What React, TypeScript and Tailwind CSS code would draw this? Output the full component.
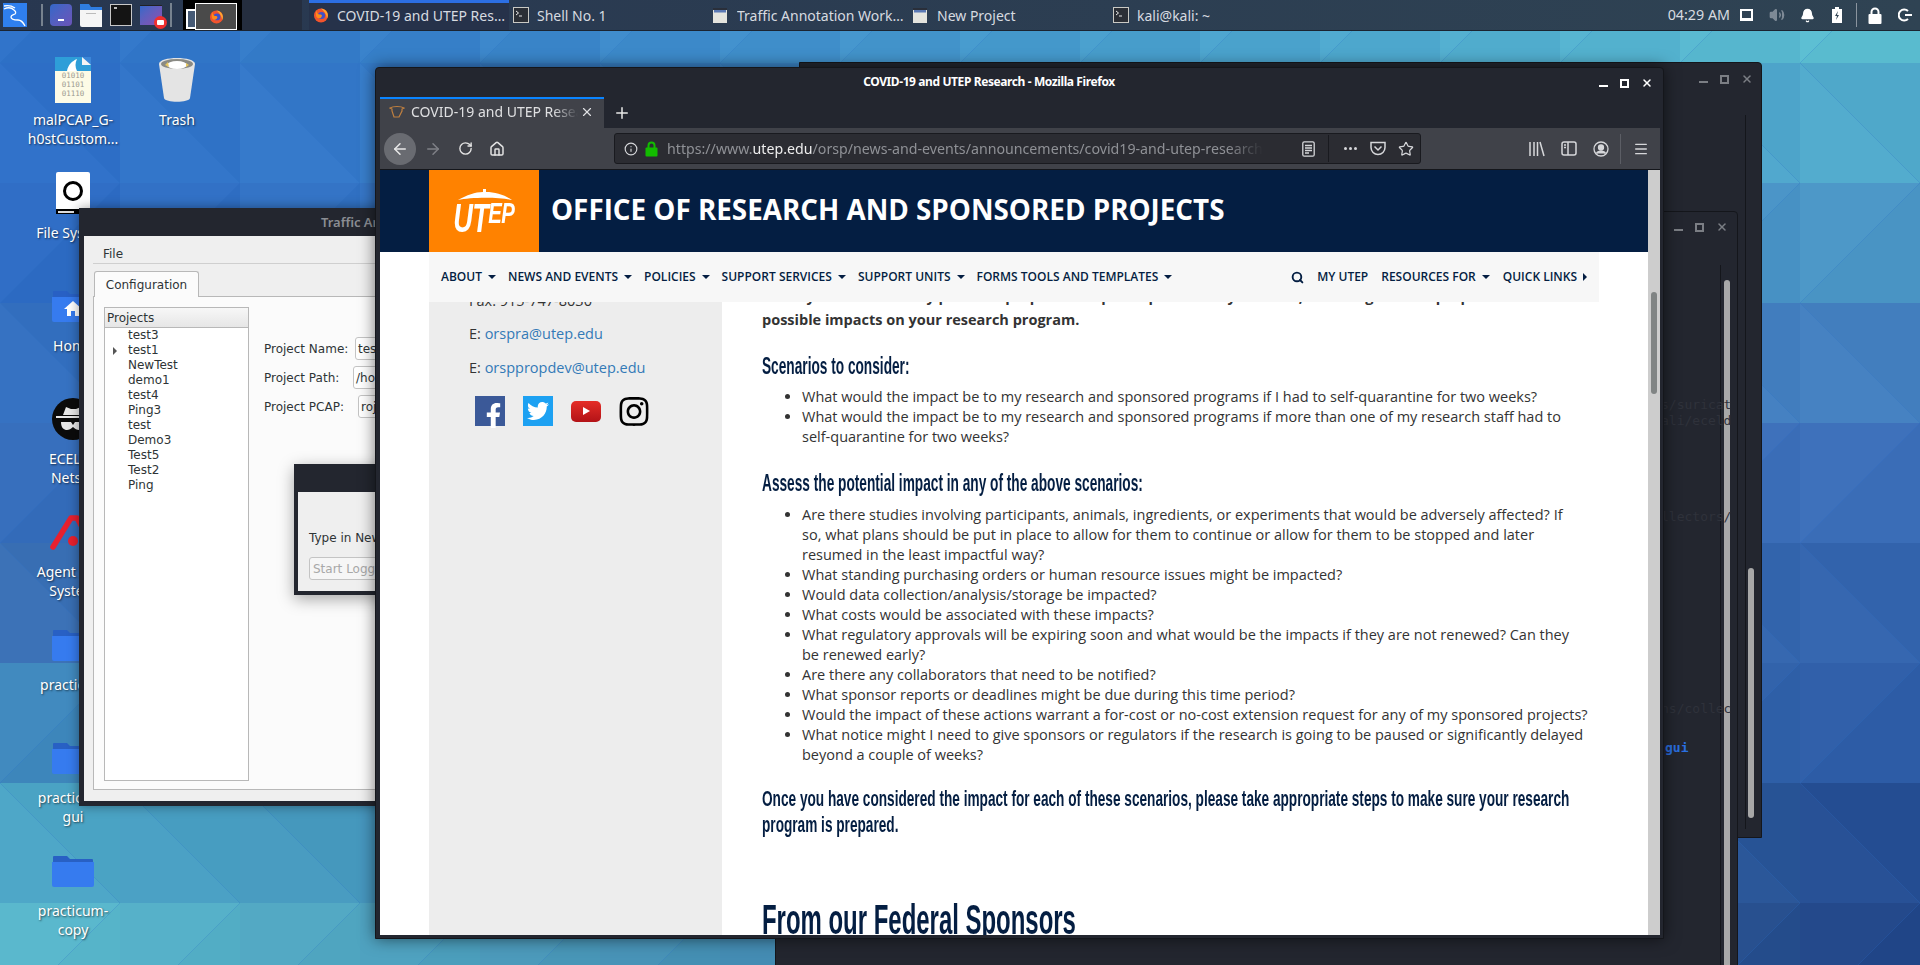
import type { ReactNode } from "react";
import {
  ArrowLeft,
  ArrowRight,
  RotateCw,
  Home,
  Info,
  Star,
  Menu,
  X,
  Plus,
  Bell,
  Volume2,
  Search,
} from "lucide-react";
import { FaFacebookF, FaTwitter, FaInstagram } from "react-icons/fa";

// wallpaper tile colours, left edge and right edge of each 120px row
const LEFT = ["#2f72c8", "#2f70c8", "#2e6cc4", "#3470c0", "#356dbb", "#3a70b5", "#3f88bd", "#4ca5c6", "#58b6cb"];
const RIGHT = ["#5bbdd1", "#51aacc", "#4b96c6", "#4480c0", "#3c6fb9", "#3465ae", "#2f5ea8", "#264f94", "#224789"];

const channels = (hex: string) => [1, 3, 5].map((i) => parseInt(hex.slice(i, i + 2), 16));

const tileColor = (row: number, col: number, delta: number) => {
  const a = channels(LEFT[row]);
  const b = channels(RIGHT[row]);
  const t = col / 15;
  const [r, g, bl] = a.map((v, i) => Math.round(v + (b[i] - v) * t + delta));
  return `rgb(${r},${g},${bl})`;
};

const Wallpaper = () => {
  const tiles: ReactNode[] = [];
  for (let row = 0; row < 9; row++) {
    for (let col = 0; col < 16; col++) {
      const x = col * 120;
      const y = row * 120 - 57;
      const x2 = x + 120;
      const y2 = y + 120;
      const first =
        row % 2 === 1 ? `${x},${y} ${x},${y2} ${x2},${y2}` : `${x},${y} ${x2},${y} ${x},${y2}`;
      const second =
        row % 2 === 1 ? `${x},${y} ${x2},${y} ${x2},${y2}` : `${x2},${y} ${x2},${y2} ${x},${y2}`;
      tiles.push(<polygon key={`${row}-${col}a`} points={first} fill={tileColor(row, col, 2)} />);
      tiles.push(<polygon key={`${row}-${col}b`} points={second} fill={tileColor(row, col, -2)} />);
    }
  }
  return (
    <svg className="absolute inset-0" width="1920" height="965" viewBox="0 0 1920 965">
      {tiles}
    </svg>
  );
};

const FirefoxLogo = ({ size = 16 }: { size?: number }) => (
  <svg className="shrink-0" width={size} height={size} viewBox="0 0 16 16">
    <circle cx="8" cy="8.5" r="7" fill="#f2542d" />
    <path d="M8 1.5c3.5.3 6.8 3 6.8 7 0 1-.3 2-.8 2.9C13.500 7 11 4 8 1.500z" fill="#ffa930" />
    <circle cx="8.500" cy="8.500" r="3.600" fill="#3f51c9" />
    <path d="M4 3c-.5 3 .8 4.500 3 4.500 1 0 1.500.3 2 1C8.500 12 5 12 3.500 10 2.500 8 2.800 5 4 3z" fill="#ff8c1a" />
  </svg>
);

const WindowGlyph = () => (
  <svg className="mr-[2px] shrink-0" width="14" height="15" viewBox="0 0 14 15">
    <rect x="0" y="0" width="14" height="15" fill="#e4e4de" />
    <rect x="0" y="0" width="14" height="2" fill="#2a2f3a" />
    <rect x="1" y="2" width="12" height="2.500" fill="#5b79b4" />
  </svg>
);

const TerminalGlyph = () => (
  <svg className="shrink-0" width="16" height="16" viewBox="0 0 16 16">
    <rect x="0.500" y="0.500" width="15" height="15" fill="#2b2f36" stroke="#c9c9c4" />
    <path d="M3 4l2.500 2L3 8M6 9h3" fill="none" stroke="#e8e8e8" strokeWidth="1" />
  </svg>
);

const KaliLogo = () => (
  <svg width="24" height="24" viewBox="0 0 24 24">
    <rect width="24" height="24" fill="#2f7fee" />
    <path
      d="M1 6c4-2 8-1 10 1 2 1.500 2 3 1 4-2 1-4 1-4 3 0 2 3 3 7 3 3 0 5 2 7 6M1 3c5-1 8 0 11 2"
      fill="none"
      stroke="#fff"
      strokeWidth="1.300"
    />
  </svg>
);

const Launchers = () => (
  <div className="flex h-[30px] w-[309px] shrink-0 items-center">
    <div className="ml-[3px]">
      <KaliLogo />
    </div>
    <div className="ml-[14px] h-[22px] w-[2px] bg-[#77828f]" />
    <div className="ml-[7px] h-[22px] w-[22px] rounded-sm bg-gradient-to-br from-[#3168c8] to-[#6a54b8] pt-[15px]">
      <div className="mx-auto h-[2px] w-[6px] bg-white" />
    </div>
    <svg className="ml-[8px]" width="22" height="24" viewBox="0 0 22 24">
      <path d="M0 1h9l2 3h11v5H0z" fill="#2f7de0" />
      <path d="M0 7h22v17H2a2 2 0 0 1-2-2z" fill="#f5f5f5" />
      <rect x="6" y="10" width="10" height="1" fill="#bbb" />
    </svg>
    <div className="ml-[8px] h-[22px] w-[22px] border border-[#c8c8c8] bg-[#141414] pl-[3px] pt-[2px]">
      <div className="h-[2px] w-[3px] bg-[#bbb]" />
    </div>
    <div className="relative ml-[8px] h-[20px] w-[22px] border-t border-[#222] bg-gradient-to-br from-[#3168c8] to-[#8a4db0]">
      <div className="absolute right-[-5px] top-[10px] flex h-[13px] w-[13px] items-center justify-center rounded-full bg-[#ef2f2f]">
        <div className="h-[5px] w-[7px] rounded-[1px] bg-white" />
      </div>
    </div>
    <div className="ml-[8px] h-[24px] w-[2px] bg-[#77828f]" />
    <div className="relative ml-[11px] h-[30px] w-[59px] bg-black">
      <div className="absolute left-[3px] top-[9px] h-[20px] w-[14px] border-2 border-white bg-[#465a75]" />
      <div className="absolute left-[12px] top-[3px] flex h-[32px] max-h-[27px] w-[42px] items-center justify-center border border-white bg-[#4a4a4a]">
        <FirefoxLogo size={15} />
      </div>
    </div>
    <div className="h-[30px] w-[60px] bg-[#252e3f]" />
  </div>
);

const TaskItem = ({ icon, label, active }: { icon: ReactNode; label: string; active?: boolean }) => (
  <div
    className={`flex h-[30px] w-[200px] shrink-0 items-center gap-[8px] pl-[4px] pr-[1px] text-[14px] text-[#d7dbe0] ${
      active ? "border-t-[3px] border-[#2c6fe4] bg-[#26324a] pb-[3px]" : ""
    }`}
  >
    {icon}
    <span className="truncate">{label}</span>
  </div>
);

const Tray = () => (
  <div className="ml-auto flex h-[30px] items-center pr-[8px] text-[14.3px] text-[#d7dbe0]">
    <span>04:29 AM</span>
    <div className="ml-[10px] h-[12px] w-[13px] border-2 border-b-[3px] border-white" />
    <Volume2 className="ml-[16px] text-[#7e8a96]" size={16} fill="#7e8a96" />
    <Bell className="ml-[15px] text-white" size={15} fill="white" />
    <svg className="ml-[17px]" width="10" height="16" viewBox="0 0 10 16">
      <path d="M0 2h3V0h4v2h3v14H0z" fill="#fff" />
      <path d="M6 4L3 9h2l-1 4 3-5H5z" fill="#2f4353" />
    </svg>
    <div className="ml-[14px] h-[24px] w-px bg-[#8a949e]" />
    <svg className="ml-[11px]" width="14" height="17" viewBox="0 0 14 17">
      <path d="M3.500 8V5a3.500 3.500 0 0 1 7 0v3" fill="none" stroke="#fff" strokeWidth="2" />
      <rect x="0.500" y="7" width="13" height="10" rx="1" fill="#fff" />
    </svg>
    <svg className="ml-[16px]" width="14" height="14" viewBox="0 0 14 14" fill="none" stroke="#fff" strokeWidth="2">
      <path d="M10 3a5.500 5.500 0 1 0 0 8M7 7h7" />
    </svg>
  </div>
);

const Taskbar = () => (
  <div className="relative flex h-[31px] border-b border-[#1b2431] bg-gradient-to-r from-[#283750] to-[#2f4353] font-['Noto_Sans',sans-serif]">
    <Launchers />
    <TaskItem active icon={<FirefoxLogo />} label="COVID-19 and UTEP Research - Mozilla Firefox" />
    <TaskItem icon={<TerminalGlyph />} label="Shell No. 1" />
    <TaskItem icon={<WindowGlyph />} label="Traffic Annotation Workbench" />
    <TaskItem icon={<WindowGlyph />} label="New Project" />
    <TaskItem icon={<TerminalGlyph />} label="kali@kali: ~" />
    <Tray />
  </div>
);

const Folder = ({ home }: { home?: boolean }) => (
  <svg width="42" height="31" viewBox="0 0 42 31">
    <path d="M1 1a1 1 0 0 1 1-1h13l3 3h22a1 1 0 0 1 1 1v6H1z" fill="#2860c4" />
    <path d="M0 6h42v23a2 2 0 0 1-2 2H2a2 2 0 0 1-2-2z" fill="#367bef" />
    {home && <path d="M21 10l-9 8h3v7h4v-5h4v5h4v-7h3z" fill="#fff" />}
  </svg>
);

const DataFile = () => (
  <div className="flex h-[46px] w-[36px] flex-col bg-[#fdfbe6]">
    <svg width="36" height="14" viewBox="0 0 36 14">
      <rect width="36" height="14" fill="#2e9ed8" />
      <path d="M12 14c1-6 5-10 10-12-2 4-2 8 0 12z" fill="#fff" />
      <path d="M27 0l9 8V0z" fill="#3b86d8" />
      <path d="M27 0v8h9z" fill="#f4f4f4" />
    </svg>
    <p className="text-center font-['DejaVu_Sans_Mono',monospace] text-[7.5px] leading-[9px] text-[#9a9a90]">
      01010
      <br />
      01101
      <br />
      01110
    </p>
  </div>
);

const TrashCan = () => (
  <svg width="36" height="44" viewBox="0 0 36 44">
    <path d="M0 6c0-8 36-8 36 0l-5 34c-1 5-25 5-26 0z" fill="#e4e4e4" />
    <ellipse cx="18" cy="6" rx="16" ry="5" fill="#8a8a84" />
    <ellipse cx="18" cy="7" rx="10" ry="4" fill="#fff" />
    <path d="M6 7l3-3 1 5zM30 7l-3-2v4z" fill="#e8c860" />
  </svg>
);

const Drive = () => (
  <div className="flex h-[42px] w-[34px] flex-col rounded-[2px] bg-white">
    <div className="flex flex-1 items-center justify-center">
      <div className="h-[20px] w-[20px] rounded-full border-[3px] border-black" />
    </div>
    <div className="h-[5px] bg-black pl-[2px] pt-[2px]">
      <div className="h-[2px] w-[16px] bg-[#ddd]" />
    </div>
  </div>
);

const SpyIcon = () => (
  <svg width="42" height="42" viewBox="0 0 42 42">
    <circle cx="21" cy="21" r="21" fill="#0b0b0b" />
    <path d="M11 17l3-8 5 2h5l5-2 3 8z" fill="#e8e8e8" />
    <rect x="4" y="18" width="34" height="2" fill="#e8e8e8" />
    <path d="M9 24h10l2 3 2-3h10c0 6-3 8-6 8-2 0-4-1-6-3-2 2-4 3-6 3-3 0-6-2-6-8z" fill="#e8e8e8" />
  </svg>
);

const AgentIcon = () => (
  <svg width="48" height="40" viewBox="0 0 48 40">
    <path d="M4 35L22 6h6l16 29" fill="none" stroke="#e8202e" strokeWidth="5.500" strokeLinecap="round" strokeLinejoin="round" />
    <circle cx="24" cy="29" r="5" fill="#e8202e" />
  </svg>
);

const DesktopIcon = ({ icon, lines }: { icon: ReactNode; lines: string[] }) => (
  <div className="flex h-[113px] w-[100px] flex-col items-center">
    <div className="flex h-[48px] items-center justify-center">{icon}</div>
    <div className="mt-[6px] text-center font-['Noto_Sans',sans-serif] text-[14px] leading-[19px] text-white [text-shadow:1px_1px_2px_rgba(0,0,0,0.6)]">
      {lines.map((line) => (
        <div key={line}>{line}</div>
      ))}
    </div>
  </div>
);

const DesktopIcons = () => (
  <>
    <div className="absolute left-[23px] top-[56px] flex flex-col">
      <DesktopIcon icon={<DataFile />} lines={["malPCAP_G-", "h0stCustom..."]} />
      <DesktopIcon icon={<Drive />} lines={["File System"]} />
      <DesktopIcon icon={<Folder home />} lines={["Home"]} />
      <DesktopIcon icon={<SpyIcon />} lines={["ECELD_", "Netsys"]} />
      <DesktopIcon icon={<AgentIcon />} lines={["Agent Mon", "System"]} />
      <DesktopIcon icon={<Folder />} lines={["practicum"]} />
      <DesktopIcon icon={<Folder />} lines={["practicum-", "gui"]} />
      <DesktopIcon icon={<Folder />} lines={["practicum-", "copy"]} />
    </div>
    <div className="absolute left-[127px] top-[56px]">
      <DesktopIcon icon={<TrashCan />} lines={["Trash"]} />
    </div>
  </>
);

const PROJECTS = ["test3", "test1", "NewTest", "demo1", "test4", "Ping3", "test", "Demo3", "Test5", "Test2", "Ping"];

const FORM_ROWS = [
  { label: "Project Name:", value: "test1", labelWidth: "w-[91px]" },
  { label: "Project Path:", value: "/home/kali/projects", labelWidth: "w-[89px]" },
  { label: "Project PCAP:", value: "rojects/test1", labelWidth: "w-[94px]" },
];

const TrafficWindow = () => (
  <div className="absolute left-[79px] top-[208px] flex h-[598px] w-[674px] flex-col rounded-t-[3px] border-[5px] border-t-0 border-[#23262f] bg-[#efefef] font-['DejaVu_Sans',sans-serif] text-[12px] text-[#2e3436] shadow-[0_0_12px_rgba(0,0,0,0.4)]">
    <div className="-mx-[5px] flex h-[28px] shrink-0 items-center justify-center bg-[#23262f] pt-[2px] font-['Noto_Sans',sans-serif] text-[13px] font-semibold text-[#8a8d93]">
      Traffic Annotation Workbench
    </div>
    <div className="flex flex-1 flex-col px-[9px]">
      <div className="flex h-[28px] shrink-0 items-center border-b border-[#cfcfcf] pl-[10px] pt-[8px]">File</div>
      <div className="relative z-10 -mb-px ml-px mt-[7px] flex h-[26px] w-[105px] items-center justify-center rounded-t-[3px] border border-b-0 border-[#b8b8b8] bg-[#fbfbfb]">
        Configuration
      </div>
      <div className="flex h-[494px] border border-[#b8b8b8] bg-[#fbfbfb] pl-[10px] pt-[10px]">
        <div className="h-[474px] w-[145px] shrink-0 border border-[#b8b8b8] bg-white">
          <div className="flex h-[20px] items-center border-b border-[#b8b8b8] bg-gradient-to-b from-[#f7f7f7] to-[#e6e6e6] pl-[2px] pt-[1px]">
            Projects
          </div>
          {PROJECTS.map((name, index) => (
            <div className="relative h-[15px] pl-[23px] leading-[15px]" key={name}>
              {index === 1 && (
                <span className="absolute left-[8px] top-[4px] h-0 w-0 border-y-[4px] border-l-[4px] border-y-transparent border-l-[#555]" />
              )}
              {name}
            </div>
          ))}
        </div>
        <div className="ml-[15px] flex flex-col gap-[6px] pt-[30px]">
          {FORM_ROWS.map((row) => (
            <div className="flex h-[23px] items-center" key={row.label}>
              <span className={`shrink-0 ${row.labelWidth}`}>{row.label}</span>
              <div className="flex h-[23px] w-[220px] items-center rounded-[3px] border border-[#c4c4c4] bg-white px-[2px]">
                {row.value}
              </div>
            </div>
          ))}
        </div>
      </div>
    </div>
    <div className="absolute left-[210px] top-[256px] flex h-[131px] w-[360px] flex-col rounded-t-[4px] border-[4px] border-t-0 border-[#23262f] bg-[#efefef] shadow-[0_4px_16px_rgba(0,0,0,0.35)]">
      <div className="-mx-[4px] h-[28px] shrink-0 bg-[#23262f]" />
      <div className="px-[11px] pt-[37px]">Type in New Project Name:</div>
      <div className="mx-[11px] mt-[10px] flex h-[23px] items-center rounded-[3px] border border-[#c4c4c4] bg-[#f6f6f6] px-[3px] text-[#a8a8a8]">
        Start Logging
      </div>
    </div>
  </div>
);

const WindowButtons = ({ color }: { color: string }) => (
  <div className={`flex items-center gap-[12px] ${color}`}>
    <div className="mt-[5px] h-[2px] w-[9px] bg-current" />
    <div className="h-[9px] w-[9px] border-2 border-current" />
    <X size={12} strokeWidth={3} />
  </div>
);

const BackWindow = () => (
  <div className="absolute left-[799px] top-[62px] h-[776px] w-[963px] rounded-tr-[4px] border border-[#14161b] bg-[#23262f]">
    <div className="absolute right-[8px] top-[10px]">
      <WindowButtons color="text-[#7b7e84]" />
    </div>
    <div className="absolute bottom-[8px] right-[15px] top-[52px] w-px bg-[#14161b]" />
    <div className="absolute bottom-[19px] right-[7px] h-[250px] w-[6px] rounded-full bg-[#a8a8a8]" />
  </div>
);

const ShellWindow = () => (
  <div className="absolute left-[775px] top-[211px] h-[760px] w-[963px] rounded-tr-[4px] border border-[#14161b] bg-[#23262f] font-['DejaVu_Sans_Mono',monospace] text-[13px] leading-[16px] text-[#2f323b]">
    <div className="absolute right-[9px] top-[9px]">
      <WindowButtons color="text-[#7b7e84]" />
    </div>
    <div className="absolute bottom-0 right-[16px] top-[53px] w-px bg-[#14161b]" />
    <div className="absolute bottom-0 right-[7px] top-[68px] w-[6px] rounded-t-full bg-[#a8a8a8]" />
    <div className="absolute left-[885px] top-[185px]">s/suricat</div>
    <div className="absolute left-[885px] top-[201px]">ali/eceld</div>
    <div className="absolute left-[885px] top-[297px]">llectors/</div>
    <div className="absolute left-[885px] top-[489px]">ns/collec</div>
    <div className="absolute left-[889px] top-[528px] font-bold text-[#2a6fe0]">gui</div>
  </div>
);

const PocketIcon = () => (
  <svg width="16" height="15" viewBox="0 0 16 15" fill="none" stroke="#d6d7da" strokeWidth="1.500">
    <path d="M1 1.500h14v5a7 7 0 0 1-14 0z" />
    <path d="M4.500 5.500L8 9l3.500-3.500" />
  </svg>
);

const ToolbarIcons = () => (
  <div className="ml-auto flex items-center pr-[11px] text-[#d6d7da]">
    <svg width="16" height="16" viewBox="0 0 16 16" fill="none" stroke="currentColor" strokeWidth="1.500">
      <path d="M1 1v14M5 1v14M8.500 1v14M11 1l4 14" />
    </svg>
    <svg className="ml-[16px]" width="16" height="15" viewBox="0 0 16 15" fill="none" stroke="currentColor" strokeWidth="1.500">
      <rect x="1" y="1" width="14" height="13" rx="2" />
      <path d="M7 1v13M3 4h2M3 6.500h2" />
    </svg>
    <svg className="ml-[16px]" width="16" height="16" viewBox="0 0 16 16" fill="none" stroke="currentColor" strokeWidth="1.300">
      <circle cx="8" cy="8" r="7" />
      <circle cx="8" cy="6.500" r="2.500" fill="currentColor" />
      <path d="M3.500 12.500c1-3 8-3 9 0" fill="currentColor" />
    </svg>
    <div className="ml-[11px] h-[30px] w-px bg-[#5c5e65]" />
    <Menu className="ml-[12px]" size={16} />
  </div>
);

const FirefoxChrome = () => (
  <>
    <div className="relative flex h-[29px] shrink-0 items-center justify-center">
      <span className="pb-[2px] pr-[62px] text-[12px] font-bold tracking-[-0.4px] text-white">
        COVID-19 and UTEP Research - Mozilla Firefox
      </span>
      <div className="absolute right-[7px] top-[9px]">
        <WindowButtons color="text-white" />
      </div>
    </div>
    <div className="flex h-[31px] shrink-0 items-center">
      <div className="flex h-[31px] w-[224px] items-center border-t-2 border-[#0a84ff] bg-[#404249] pb-[4px] pl-[9px] text-[14px] text-[#dfe0e2]">
        <svg className="shrink-0" width="16" height="14" viewBox="0 0 16 14">
          <path d="M1 3c3-2 11-2 14 0l-2 1v2l-3 6H5L3 6V4z" fill="none" stroke="#c08040" strokeWidth="1.200" />
        </svg>
        <span className="ml-[6px] w-[167px] overflow-hidden whitespace-nowrap [mask-image:linear-gradient(to_right,black_85%,transparent)]">
          COVID-19 and UTEP Research
        </span>
        <X className="ml-[2px] shrink-0" size={14} />
      </div>
      <Plus className="ml-[9px] text-[#e8e8e8]" size={18} />
    </div>
    <div className="flex h-[42px] shrink-0 items-center border-b border-[#14161b] bg-[#404249]">
      <div className="ml-[4px] flex h-[32px] w-[32px] items-center justify-center rounded-full bg-[#696b71] text-[#e8e8e8]">
        <ArrowLeft size={18} />
      </div>
      <ArrowRight className="ml-[8px] text-[#7f8187]" size={18} />
      <RotateCw className="ml-[16px] text-[#e4e4e4]" size={15} strokeWidth={2.200} />
      <Home className="ml-[16px] text-[#e4e4e4]" size={16} strokeWidth={2.200} />
      <div className="ml-[109px] flex h-[31px] w-[807px] items-center rounded-[3px] border border-[#191a1f] bg-[#2b2c32] text-[#d6d7da]">
        <Info className="ml-[9px] shrink-0" size={14} />
        <svg className="ml-[7px] shrink-0" width="13" height="16" viewBox="0 0 13 16">
          <path d="M3.500 7V4.500a3 3 0 0 1 6 0V7" fill="none" stroke="#12bc00" strokeWidth="2" />
          <rect x="0.500" y="6.500" width="12" height="9" rx="1" fill="#12bc00" />
        </svg>
        <span className="ml-[9px] w-[596px] shrink-0 overflow-hidden whitespace-nowrap font-['Noto_Sans',sans-serif] text-[14.2px] text-[#8f9196] [mask-image:linear-gradient(to_right,black_94%,transparent)]">
          https://www.<span className="text-[#eeeeee]">utep.edu</span>
          /orsp/news-and-events/announcements/covid19-and-utep-research
        </span>
        <svg className="ml-[39px]" width="13" height="16" viewBox="0 0 13 16" fill="none" stroke="currentColor" strokeWidth="1.300">
          <rect x="0.800" y="0.800" width="11.400" height="14.400" rx="1.500" />
          <path d="M3 4.500h7M3 7h7M3 9.500h7M3 12h4" />
        </svg>
        <div className="ml-[13px] h-[27px] w-px bg-[#191a1f]" />
        <span className="ml-[15px] flex gap-[2px]">
          <i className="h-[3px] w-[3px] rounded-full bg-current" />
          <i className="h-[3px] w-[3px] rounded-full bg-current" />
          <i className="h-[3px] w-[3px] rounded-full bg-current" />
        </span>
        <span className="ml-[13px]">
          <PocketIcon />
        </span>
        <Star className="ml-[12px]" size={16} strokeWidth={1.800} />
      </div>
      <ToolbarIcons />
    </div>
  </>
);

const Caret = ({ right }: { right?: boolean }) =>
  right ? (
    <span className="ml-[6px] h-0 w-0 border-y-[4px] border-l-[4px] border-y-transparent border-l-[#041e42]" />
  ) : (
    <span className="ml-[6px] h-0 w-0 border-x-[4px] border-t-[4px] border-x-transparent border-t-[#041e42]" />
  );

const NavItem = ({ label, plain, right }: { label: string; plain?: boolean; right?: boolean }) => (
  <div className="flex items-center whitespace-nowrap">
    {label}
    {!plain && <Caret right={right} />}
  </div>
);

const SiteNav = () => (
  <div className="absolute left-[49px] top-0 z-10 flex h-[50px] w-[1170px] items-center gap-[12px] bg-[#f7f7f7] px-[12px] font-['Open_Sans',sans-serif] text-[12px] font-semibold text-[#041e42]">
    <NavItem label="ABOUT" />
    <NavItem label="NEWS AND EVENTS" />
    <NavItem label="POLICIES" />
    <NavItem label="SUPPORT SERVICES" />
    <NavItem label="SUPPORT UNITS" />
    <NavItem label="FORMS TOOLS AND TEMPLATES" />
    <div className="ml-auto flex items-center gap-[13px]">
      <Search size={13} strokeWidth={3.500} />
      <NavItem label="MY UTEP" plain />
      <NavItem label="RESOURCES FOR" />
      <NavItem label="QUICK LINKS" right />
    </div>
  </div>
);

const UtepLogo = () => (
  <div className="relative flex h-[82px] w-[110px] shrink-0 items-center justify-center bg-[#ff8200]">
    <svg className="absolute left-[28px] top-[19px]" width="56" height="12" viewBox="0 0 56 12">
      <path d="M1 11C10 6 18 3 26 3V0h3v3c9 0 19 3 26 8-12-3-41-3-54 0z" fill="#fff" />
    </svg>
    <span className="mt-[14px] flex origin-center scale-x-[0.68] items-start font-['Liberation_Sans',sans-serif] font-bold italic leading-none tracking-[-1px] text-white">
      <span className="text-[40px]">UT</span>
      <span className="text-[30px]">EP</span>
    </span>
  </div>
);

const SiteHeader = () => (
  <div className="flex h-[82px] shrink-0 bg-[#041e42] pl-[49px]">
    <UtepLogo />
    <div className="ml-[12px] flex items-center pb-[2px] font-['Open_Sans',sans-serif] text-[27.8px] font-bold text-white">
      OFFICE OF RESEARCH AND SPONSORED PROJECTS
    </div>
  </div>
);

const SOCIAL_BOX = "flex h-[30px] w-[30px] items-center justify-center";

const Sidebar = () => (
  <div className="w-[293px] shrink-0 bg-[#ededed] pl-[40px] pt-[39px] text-[14.5px] leading-[20px] text-[#333]">
    <p className="mb-[13px]">Fax: 915-747-8030</p>
    <p className="mb-[14px]">
      E: <span className="text-[#337ab7]">orspra@utep.edu</span>
    </p>
    <p>
      E: <span className="text-[#337ab7]">orsppropdev@utep.edu</span>
    </p>
    <div className="ml-[6px] mt-[18px] flex gap-[18px]">
      <div className={`${SOCIAL_BOX} items-end bg-[#3b5998] text-white`}>
        <FaFacebookF size={25} className="translate-x-[3px] translate-y-[2px]" />
      </div>
      <div className={`${SOCIAL_BOX} bg-[#1da1f2] text-white`}>
        <FaTwitter size={22} />
      </div>
      <div className={SOCIAL_BOX}>
        <div className="flex h-[21px] w-[30px] items-center justify-center rounded-[5px] bg-gradient-to-b from-[#e52d27] to-[#b31217]">
          <span className="ml-[1px] h-0 w-0 border-y-[4px] border-l-[7px] border-y-transparent border-l-white" />
        </div>
      </div>
      <div className={SOCIAL_BOX}>
        <FaInstagram size={33} className="text-black" />
      </div>
    </div>
  </div>
);

const HEADING = "inline-block origin-left whitespace-nowrap font-['Liberation_Sans',sans-serif] font-bold text-[#041e42]";

const FIRST_LIST = [
  "What would the impact be to my research and sponsored programs if I had to self-quarantine for two weeks?",
  "What would the impact be to my research and sponsored programs if more than one of my research staff had to\nself-quarantine for two weeks?",
];

const SECOND_LIST = [
  "Are there studies involving participants, animals, ingredients, or experiments that would be adversely affected? If\nso, what plans should be put in place to allow for them to continue or allow for them to be stopped and later\nresumed in the least impactful way?",
  "What standing purchasing orders or human resource issues might be impacted?",
  "Would data collection/analysis/storage be impacted?",
  "What costs would be associated with these impacts?",
  "What regulatory approvals will be expiring soon and what would be the impacts if they are not renewed? Can they\nbe renewed early?",
  "Are there any collaborators that need to be notified?",
  "What sponsor reports or deadlines might be due during this time period?",
  "Would the impact of these actions warrant a for-cost or no-cost extension request for any of my sponsored projects?",
  "What notice might I need to give sponsors or regulators if the research is going to be paused or significantly delayed\nbeyond a couple of weeks?",
];

const BulletList = ({ items, className }: { items: string[]; className: string }) => (
  <ul className={`list-disc whitespace-pre-line pl-[40px] ${className}`}>
    {items.map((item) => (
      <li key={item}>{item}</li>
    ))}
  </ul>
);

const MainColumn = () => (
  <div className="w-[900px] shrink-0 pl-[40px] pt-[35px] text-[14.5px] leading-[20px] text-[#333]">
    <p className="whitespace-nowrap font-bold">
      Faculty should carefully plan and prepare a response plan for any absence, including all staff proposals and
    </p>
    <p className="mt-[3px] font-bold">possible impacts on your research program.</p>
    <h3 className="mt-[20px] h-[30px] text-[24px] leading-[30px]">
      <span className={`${HEADING} scale-x-[0.57]`}>Scenarios to consider:</span>
    </h3>
    <BulletList items={FIRST_LIST} className="mt-[7px]" />
    <h3 className="mt-[20px] h-[30px] text-[24px] leading-[30px]">
      <span className={`${HEADING} scale-x-[0.57]`}>Assess the potential impact in any of the above scenarios:</span>
    </h3>
    <BulletList items={SECOND_LIST} className="mt-[8px]" />
    <p className="mt-[21px] h-[52px] text-[22px] leading-[26px]">
      <span className={`${HEADING} scale-x-[0.62]`}>
        Once you have considered the impact for each of these scenarios, please take appropriate steps to make sure your research
        <br />
        program is prepared.
      </span>
    </p>
    <h1 className="mt-[55px] h-[50px] text-[42px] leading-[50px]">
      <span className={`${HEADING} scale-x-[0.57]`}>From our Federal Sponsors</span>
    </h1>
  </div>
);

const FirefoxWindow = () => (
  <div className="absolute left-[375px] top-[67px] flex h-[872px] w-[1289px] flex-col rounded-t-[4px] border border-[#14161b] bg-[#23262f] pb-[3px] pl-[4px] pr-[3px] font-['Noto_Sans',sans-serif] shadow-[0_0_16px_rgba(0,0,0,0.55)]">
    <FirefoxChrome />
    <div className="flex min-h-0 flex-1">
      <div className="flex min-w-0 flex-1 flex-col overflow-hidden bg-white font-['Open_Sans',sans-serif]">
        <SiteHeader />
        <div className="relative flex min-h-0 flex-1 overflow-hidden pl-[49px]">
          <SiteNav />
          <Sidebar />
          <MainColumn />
        </div>
      </div>
      <div className="w-[12px] shrink-0 bg-[#cdcdcd] px-[3px] pt-[122px]">
        <div className="h-[102px] rounded-full bg-[#808484]" />
      </div>
    </div>
  </div>
);

export default function App() {
  return (
    <div className="relative h-[965px] w-[1920px] overflow-hidden bg-[#2f72c8]">
      <Wallpaper />
      <Taskbar />
      <DesktopIcons />
      <TrafficWindow />
      <BackWindow />
      <ShellWindow />
      <FirefoxWindow />
    </div>
  );
}
